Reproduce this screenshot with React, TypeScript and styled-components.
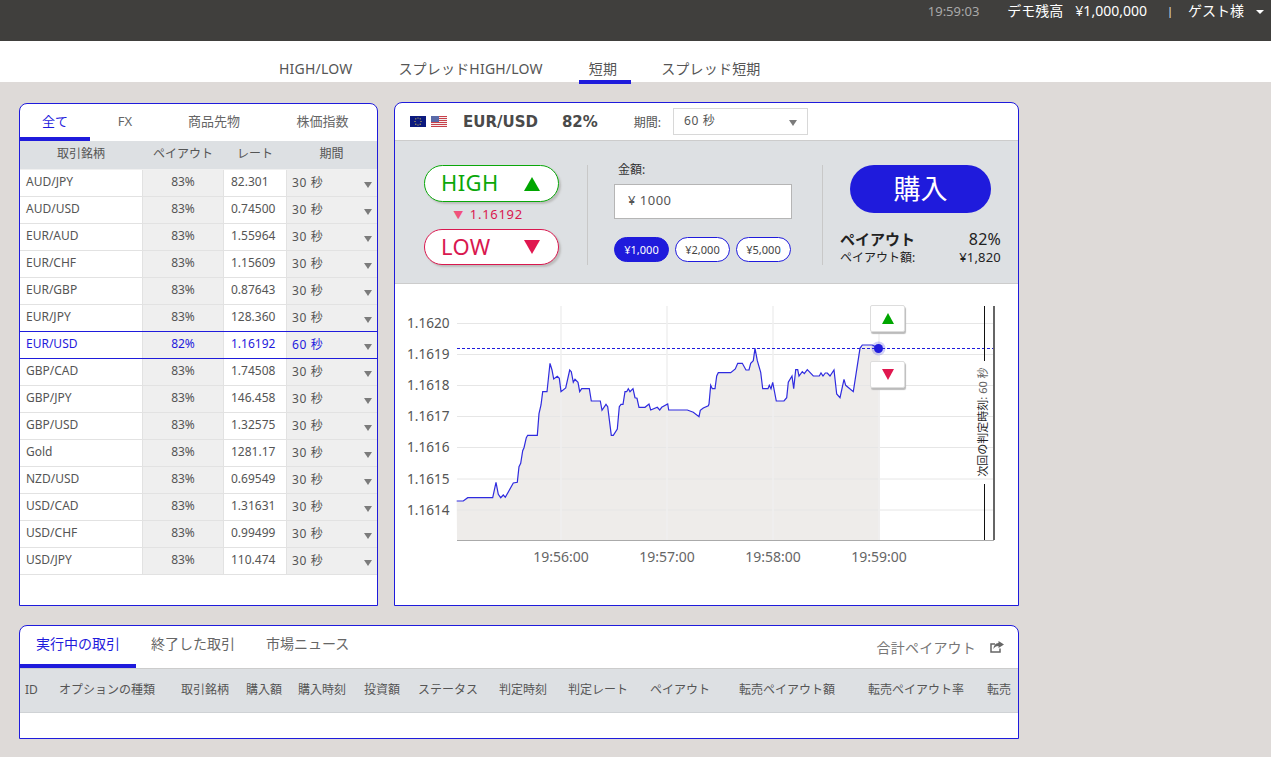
import React from "react"
import styled, { createGlobalStyle } from "styled-components"

const BLUE = "#1f1bdc"
const FONT = `"Noto Sans", "Noto Sans CJK JP", sans-serif`

const GlobalStyle = createGlobalStyle`
  html, body {
    margin: 0;
    padding: 0;
    background: #dedad8;
    font-family: ${FONT};
    color: #555;
  }
  * { box-sizing: border-box; }
`

const TopBar = styled.header`
  height: 41px;
  background: #403f3d;
  color: #fff;
  display: flex;
  justify-content: flex-end;
  align-items: flex-start;
  padding-right: 7px;
  font-size: 14px;
  line-height: 22px;
`
const Clock = styled.span`
  color: #a9a9a9;
  font-size: 13px;
  margin-right: 28px;
`
const Balance = styled.span`
  margin-left: ${p => p.$left || 0}px;
`
const Pipe = styled.span`
  margin: 0 15px 0 20px;
  font-size: 11px;
  color: #eee;
`
const Caret = styled.i`
  width: 0;
  height: 0;
  margin: 10px 0 0 12px;
  border-left: 4px solid transparent;
  border-right: 4px solid transparent;
  border-top: 4px solid #fff;
`

const Nav = styled.nav`
  height: 41px;
  background: #fff;
  display: flex;
  padding-left: 269px;
  gap: 22px;
`
const NavItem = styled.a`
  height: 43px;
  padding: 17px 14px 0 10px;
  margin-right: ${p => (p.$active ? -2 : 0)}px;
  font-size: 14px;
  line-height: 22px;
  letter-spacing: 0.2px;
  color: #555;
  border-bottom: 4px solid ${p => (p.$active ? BLUE : "transparent")};
  position: relative;
  white-space: nowrap;
`

const Main = styled.main`
  display: flex;
  align-items: flex-start;
  gap: 16px;
  padding: 20px 0 0 19px;
`

const Panel = styled.section`
  background: #fff;
  border: 1px solid ${BLUE};
  border-radius: 8px 8px 0 0;
  overflow: hidden;
`
const MarketPanel = styled(Panel)`
  width: 359px;
  height: 503px;
  margin-top: 1px;
`
const TradePanel = styled(Panel)`
  width: 625px;
  height: 504px;
`

const MarketTabs = styled.div`
  display: grid;
  grid-template-columns: 70px 70px 108px 109px;
  height: 37px;
`
const MarketTab = styled.div`
  height: 37px;
  text-align: center;
  font-size: 13px;
  line-height: 34px;
  color: ${p => (p.$active ? BLUE : "#666")};
  border-bottom: 4px solid ${p => (p.$active ? BLUE : "transparent")};
`

const MarketGrid = "122px 82px 62px 91px"

const MarketHead = styled.div`
  display: grid;
  grid-template-columns: ${MarketGrid};
  height: 29px;
  background: #dde0e3;
  font-size: 12px;
  line-height: 26px;
  text-align: center;
  border-bottom: 1px solid #f0f0f0;
`
const MarketRow = styled.div`
  display: grid;
  grid-template-columns: ${MarketGrid};
  height: 27px;
  font-size: 12px;
  line-height: 23px;
  border-bottom: 1px solid ${p => (p.$selected ? BLUE : "#e2e2e2")};
  color: ${p => (p.$selected ? BLUE : "#555")};
  box-shadow: ${p => (p.$selected ? `0 -1px 0 ${BLUE}` : "none")};
`
const NameCell = styled.div`
  padding-left: 6px;
`
const PayoutCell = styled.div`
  background: #efefef;
  text-align: center;
  border-left: 1px solid #e2e2e2;
  border-right: 1px solid #e2e2e2;
`
const RateCell = styled.div`
  padding-left: 7px;
`
const PeriodCell = styled.div`
  background: #efefef;
  border-left: 1px solid #e2e2e2;
  padding: 1px 5px 0 5px;
  display: flex;
  justify-content: space-between;
  letter-spacing: 0.6px;
`
const Arrow = styled.i`
  width: 0;
  height: 0;
  margin-top: 11px;
  border-left: 4px solid transparent;
  border-right: 4px solid transparent;
  border-top: 6px solid #7b7b7b;
`

const TradeHead = styled.div`
  height: 38px;
  display: flex;
  align-items: center;
  padding-left: 15px;
  border-bottom: 1px solid #ccc;
`
const Flags = styled.div`
  display: flex;
  gap: 5px;
  margin-right: 16px;
`
const Pair = styled.b`
  font-family: "DejaVu Sans", sans-serif;
  font-size: 15px;
  color: #4a4a4a;
  margin-right: 24px;
`
const PeriodLabel = styled.span`
  font-size: 12px;
  margin: 0 12px 0 12px;
`
const PeriodSelect = styled.div`
  width: 135px;
  height: 27px;
  border: 1px solid #d8d8d8;
  padding: 0 10px;
  font-size: 12px;
  line-height: 23px;
  letter-spacing: 0.6px;
  display: flex;
  justify-content: space-between;
`

const Ticket = styled.div`
  height: 143px;
  background: #dde0e3;
  border-bottom: 1px solid #ccc;
  display: flex;
  padding-top: 24px;
`
const Direction = styled.div`
  width: 193px;
  height: 100px;
  padding-left: 29px;
  border-right: 1px solid #c8c8c8;
`
const DirectionButton = styled.div`
  width: 135px;
  height: ${p => (p.$low ? 36 : 37)}px;
  background: #fff;
  border: 1px solid ${p => (p.$low ? "#d9184f" : "#0aa70a")};
  border-radius: 19px;
  box-shadow: 2px 2px 2px #bdbdbd;
  color: ${p => (p.$low ? "#d9184f" : "#0aa70a")};
  display: flex;
  justify-content: space-between;
  align-items: center;
  padding: 0 18px 0 16px;
`
const DirectionLabel = styled.span`
  font-size: 22px;
  letter-spacing: 0.4px;
  line-height: 30px;
  margin-top: -3px;
`
const Tri = styled.i`
  width: 0;
  height: 0;
  border-left: 8px solid transparent;
  border-right: 8px solid transparent;
  border-bottom: ${p => (p.$down ? "none" : "14px solid #00a600")};
  border-top: ${p => (p.$down ? "14px solid #e0174f" : "none")};
`
const Quote = styled.div`
  width: 135px;
  height: 27px;
  padding-right: 7px;
  text-align: center;
  font-size: 13px;
  line-height: 25px;
  letter-spacing: 0.7px;
  color: #d9184f;
`
const QuoteMark = styled.span`
  color: #f0527c;
  font-size: 10px;
  margin-right: 6px;
`

const Amount = styled.div`
  width: 235px;
  height: 100px;
  padding-left: 26px;
  border-right: 1px solid #c8c8c8;
`
const AmountLabel = styled.div`
  font-size: 12px;
  line-height: 10px;
  margin: 0 0 9px 4px;
  color: #333;
`
const AmountInput = styled.div`
  width: 178px;
  height: 35px;
  background: #fff;
  border: 1px solid #b5b5b5;
  padding-left: 13px;
  font-size: 13px;
  line-height: 31px;
  letter-spacing: 0.5px;
`
const Chips = styled.div`
  display: flex;
  gap: 6px;
  margin-top: 18px;
`
const Chip = styled.div`
  width: 55px;
  height: 25px;
  border-radius: 13px;
  border: 1px solid ${BLUE};
  background: ${p => (p.$active ? BLUE : "#fff")};
  color: ${p => (p.$active ? "#fff" : "#444")};
  font-size: 11px;
  line-height: 23px;
  text-align: center;
`

const Purchase = styled.div`
  width: 195px;
  padding: 0 17px;
  color: #222;
`
const BuyButton = styled.div`
  width: 141px;
  height: 48px;
  margin-left: 10px;
  border-radius: 24px;
  background: ${BLUE};
  color: #fff;
  font-size: 27px;
  line-height: 48px;
  text-align: center;
`
const PayoutLine = styled.div`
  display: flex;
  justify-content: space-between;
  align-items: baseline;
  margin-top: ${p => p.$top || 0}px;
  font-size: ${p => p.$size}px;
  line-height: ${p => p.$height}px;
`
const PayoutTitle = styled.b`
  font-size: 15px;
`
const PayoutValue = styled.span`
  font-size: ${p => p.$size}px;
  letter-spacing: 0.2px;
`

const ChartArea = styled.div`
  position: relative;
  height: 321px;
`
const ChartSvg = styled.svg`
  display: block;
  font-family: ${FONT};
`
const ChartButton = styled.div`
  position: absolute;
  left: 475px;
  top: ${p => p.$top}px;
  width: 35px;
  height: 27px;
  background: #fff;
  border: 1px solid #ddd;
  border-radius: 2px;
  box-shadow: 1px 2px 1px #bbb;
  display: flex;
  align-items: center;
  justify-content: center;
`
const ChartTri = styled.i`
  width: 0;
  height: 0;
  border-left: 6px solid transparent;
  border-right: 6px solid transparent;
  border-bottom: ${p => (p.$down ? "none" : "11px solid #00a600")};
  border-top: ${p => (p.$down ? "11px solid #e0174f" : "none")};
`

const OrdersPanel = styled(Panel)`
  width: 1000px;
  height: 114px;
  margin: 19px 0 18px 19px;
`
const OrderTabs = styled.div`
  height: 43px;
  display: flex;
  align-items: flex-start;
  border-bottom: 1px solid #ccc;
`
const OrderTab = styled.div`
  width: ${p => p.$width}px;
  height: 42px;
  font-size: 14px;
  line-height: 35px;
  padding-left: ${p => p.$pad}px;
  color: ${p => (p.$active ? BLUE : "#666")};
  border-bottom: 4px solid ${p => (p.$active ? BLUE : "transparent")};
`
const TotalPayout = styled.div`
  margin-left: auto;
  display: flex;
  align-items: center;
  gap: 14px;
  height: 41px;
  padding-right: 14px;
  font-size: 14px;
  letter-spacing: 0.2px;
  color: #777;
`
const OrderHead = styled.div`
  height: 44px;
  background: #dde0e3;
  border-bottom: 1px solid #cfd2d5;
  display: grid;
  grid-template-columns: 34px 122px 65px 52px 66px 54px 81px 69px 82px 89px 129px 119px 24px;
  padding-left: 5px;
  font-size: 12px;
  line-height: 42px;
  white-space: nowrap;
  overflow: hidden;
`

const markets = [
  ["AUD/JPY", "83%", "82.301", "30 秒"],
  ["AUD/USD", "83%", "0.74500", "30 秒"],
  ["EUR/AUD", "83%", "1.55964", "30 秒"],
  ["EUR/CHF", "83%", "1.15609", "30 秒"],
  ["EUR/GBP", "83%", "0.87643", "30 秒"],
  ["EUR/JPY", "83%", "128.360", "30 秒"],
  ["EUR/USD", "82%", "1.16192", "60 秒"],
  ["GBP/CAD", "83%", "1.74508", "30 秒"],
  ["GBP/JPY", "83%", "146.458", "30 秒"],
  ["GBP/USD", "83%", "1.32575", "30 秒"],
  ["Gold", "83%", "1281.17", "30 秒"],
  ["NZD/USD", "83%", "0.69549", "30 秒"],
  ["USD/CAD", "83%", "1.31631", "30 秒"],
  ["USD/CHF", "83%", "0.99499", "30 秒"],
  ["USD/JPY", "83%", "110.474", "30 秒"],
]

const orderColumns = ["ID", "オプションの種類", "取引銘柄", "購入額", "購入時刻", "投資額", "ステータス", "判定時刻", "判定レート", "ペイアウト", "転売ペイアウト額", "転売ペイアウト率", "転売"]

// traced from the reference, in 3x crop coordinates
const partA = [[170,618],[190,618],[203,608],[278,608],[288,562],[295,598],[302,608],[310,600],[316,607],[340,564],[352,562],[357,515],[362,505],[368,467],[372,458],[379,428],[383,421],[412,421],[417,356],[423,330],[428,290],[441,290],[450,205],[456,225],[461,252],[472,244],[478,250],[483,290],[497,279],[509,225],[514,230],[520,262],[525,253],[534,262],[539,290],[545,281],[568,281],[574,318],[601,318],[606,346],[618,328],[623,335],[634,421],[640,421],[652,402],[658,335],[663,328],[669,328],[675,290],[680,290],[685,281],[690,290],[699,281],[705,308],[711,310],[717,337],[735,337],[747,327],[752,345],[772,337],[779,345],[785,337],[803,327],[806,345],[862,345],[880,352],[897,365],[901,346],[910,339],[925,332]]
const partB = [[27,327],[32,271],[37,281],[45,281],[50,243],[55,233],[92,233],[106,222],[113,205],[127,205],[138,225],[147,225],[152,205],[160,197],[165,160],[172,197],[182,232],[188,281],[204,281],[208,271],[213,281],[218,262],[229,318],[252,318],[260,308],[265,262],[276,243],[281,281],[287,224],[293,224],[297,243],[307,230],[313,236],[322,224],[340,243],[358,243],[363,234],[369,243],[376,234],[382,234],[390,243],[402,225],[410,297],[420,308],[432,253],[437,271],[460,290],[480,160],[487,150],[517,150],[535,160]]

const toScreen = (pts: number[][], ox: number) =>
  pts.map(([x, y]) => `${(ox + x / 3).toFixed(1)},${(295 + y / 3).toFixed(1)}`)
const line = [...toScreen(partA, 400), ...toScreen(partB, 700)]
const area = `457,540 ${line.join(" ")} 880,348 880,540`

const yTicks = [["1.1620", 323.5], ["1.1619", 354.5], ["1.1618", 385.5], ["1.1617", 416.5], ["1.1616", 447.5], ["1.1615", 479], ["1.1614", 510]] as const
const xTicks = [["19:56:00", 561], ["19:57:00", 667], ["19:58:00", 773], ["19:59:00", 879]] as const

const EuFlag = () => (
  <svg width="16" height="11" viewBox="0 0 16 11">
    <rect width="16" height="11" fill="#0c1a7e" />
    {[[8,2],[10.2,2.8],[11,5.5],[10.2,8.2],[8,9],[5.8,8.2],[5,5.5],[5.8,2.8]].map(([x, y]) => (
      <circle key={`${x}-${y}`} cx={x} cy={y} r="0.6" fill="#e8d24a" />
    ))}
  </svg>
)

const UsFlag = () => (
  <svg width="16" height="11" viewBox="0 0 16 11">
    <rect width="16" height="11" fill="#f4eeee" />
    {[0, 2, 4, 6, 8, 10].map(y => (
      <rect key={y} y={y} width="16" height="1" fill="#c8414b" />
    ))}
    <rect width="8" height="6" fill="#5a6aa8" />
  </svg>
)

const ShareIcon = () => (
  <svg width="14" height="12" viewBox="0 0 14 12">
    <path d="M5 3H1v8h9V7.5" fill="none" stroke="#666" strokeWidth="1.5" />
    <path d="M8.5 0L14 3.5 8.5 7V5C6 5 4.5 6 3.5 8c0-3 2-6 5-6z" fill="#666" />
  </svg>
)

const Chart = () => (
  <ChartArea>
    <ChartSvg width="623" height="321" viewBox="395 284 623 321">
      <polygon points={area} fill="#eeecea" />
      {yTicks.map(([label, y]) => (
        <g key={label}>
          <line x1="457" x2="994" y1={y} y2={y} stroke="#e6e6e6" />
          <text x="407" y={y + 4.5} fontSize="13.6" fill="#555">{label}</text>
        </g>
      ))}
      {xTicks.map(([label, x]) => (
        <g key={label}>
          <line x1={x} x2={x} y1="306" y2="540" stroke="#efefef" strokeWidth="1.5" />
          <text x={x} y="562" fontSize="14" fill="#666" textAnchor="middle">{label}</text>
        </g>
      ))}
      <line x1="457" x2="994" y1="540.5" y2="540.5" stroke="#aaa" />
      <polyline points={line.join(" ")} fill="none" stroke="#2f2bdf" strokeWidth="1.2" />
      <line x1="457" x2="994" y1="348.5" y2="348.5" stroke={BLUE} strokeDasharray="3 2" />
      <circle cx="878.5" cy="348.5" r="7" fill={BLUE} opacity="0.2" />
      <circle cx="878.5" cy="348.5" r="4.5" fill={BLUE} />
      <line x1="994" x2="994" y1="306" y2="540" stroke="#666" strokeWidth="2" />
      <line x1="984.5" x2="984.5" y1="306" y2="361" stroke="#111" />
      <line x1="984.5" x2="984.5" y1="484" y2="540" stroke="#111" />
      <text x="987" y="422" fontSize="11" fill="#222" textAnchor="middle" transform="rotate(-90 987 422)">次回の判定時刻<tspan fill="#666">: 60 秒</tspan></text>
    </ChartSvg>
    <ChartButton $top={21}><ChartTri /></ChartButton>
    <ChartButton $top={77}><ChartTri $down /></ChartButton>
  </ChartArea>
)

const App = () => {
  return (
    <>
      <GlobalStyle />
      <TopBar>
        <Clock>19:59:03</Clock>
        <Balance>デモ残高</Balance>
        <Balance $left={12}>¥1,000,000</Balance>
        <Pipe>|</Pipe>
        <Balance>ゲスト様</Balance>
        <Caret />
      </TopBar>
      <Nav>
        <NavItem>HIGH/LOW</NavItem>
        <NavItem>スプレッドHIGH/LOW</NavItem>
        <NavItem $active>短期</NavItem>
        <NavItem>スプレッド短期</NavItem>
      </Nav>
      <Main>
        <MarketPanel>
          <MarketTabs>
            <MarketTab $active>全て</MarketTab>
            <MarketTab>FX</MarketTab>
            <MarketTab>商品先物</MarketTab>
            <MarketTab>株価指数</MarketTab>
          </MarketTabs>
          <MarketHead>
            <div>取引銘柄</div>
            <div>ペイアウト</div>
            <div>レート</div>
            <div>期間</div>
          </MarketHead>
          {markets.map(([name, payout, rate, period]) => (
            <MarketRow key={name} $selected={name === "EUR/USD"}>
              <NameCell>{name}</NameCell>
              <PayoutCell>{payout}</PayoutCell>
              <RateCell>{rate}</RateCell>
              <PeriodCell>{period}<Arrow /></PeriodCell>
            </MarketRow>
          ))}
        </MarketPanel>
        <TradePanel>
          <TradeHead>
            <Flags><EuFlag /><UsFlag /></Flags>
            <Pair>EUR/USD</Pair>
            <Pair>82%</Pair>
            <PeriodLabel>期間:</PeriodLabel>
            <PeriodSelect>60 秒<Arrow /></PeriodSelect>
          </TradeHead>
          <Ticket>
            <Direction>
              <DirectionButton><DirectionLabel>HIGH</DirectionLabel><Tri /></DirectionButton>
              <Quote><QuoteMark>▼</QuoteMark>1.16192</Quote>
              <DirectionButton $low><DirectionLabel>LOW</DirectionLabel><Tri $down /></DirectionButton>
            </Direction>
            <Amount>
              <AmountLabel>金額:</AmountLabel>
              <AmountInput>¥ 1000</AmountInput>
              <Chips>
                <Chip $active>¥1,000</Chip>
                <Chip>¥2,000</Chip>
                <Chip>¥5,000</Chip>
              </Chips>
            </Amount>
            <Purchase>
              <BuyButton>購入</BuyButton>
              <PayoutLine $top={16} $size={15} $height={21}><PayoutTitle>ペイアウト</PayoutTitle><PayoutValue $size={16}>82%</PayoutValue></PayoutLine>
              <PayoutLine $size={12} $height={14}><span>ペイアウト額:</span><PayoutValue $size={13}>¥1,820</PayoutValue></PayoutLine>
            </Purchase>
          </Ticket>
          <Chart />
        </TradePanel>
      </Main>
      <OrdersPanel>
        <OrderTabs>
          <OrderTab $active $width={116} $pad={16}>実行中の取引</OrderTab>
          <OrderTab $width={116} $pad={15}>終了した取引</OrderTab>
          <OrderTab $width={116} $pad={14}>市場ニュース</OrderTab>
          <TotalPayout>合計ペイアウト<ShareIcon /></TotalPayout>
        </OrderTabs>
        <OrderHead>
          {orderColumns.map(col => <div key={col}>{col}</div>)}
        </OrderHead>
      </OrdersPanel>
    </>
  )
}

export default App
